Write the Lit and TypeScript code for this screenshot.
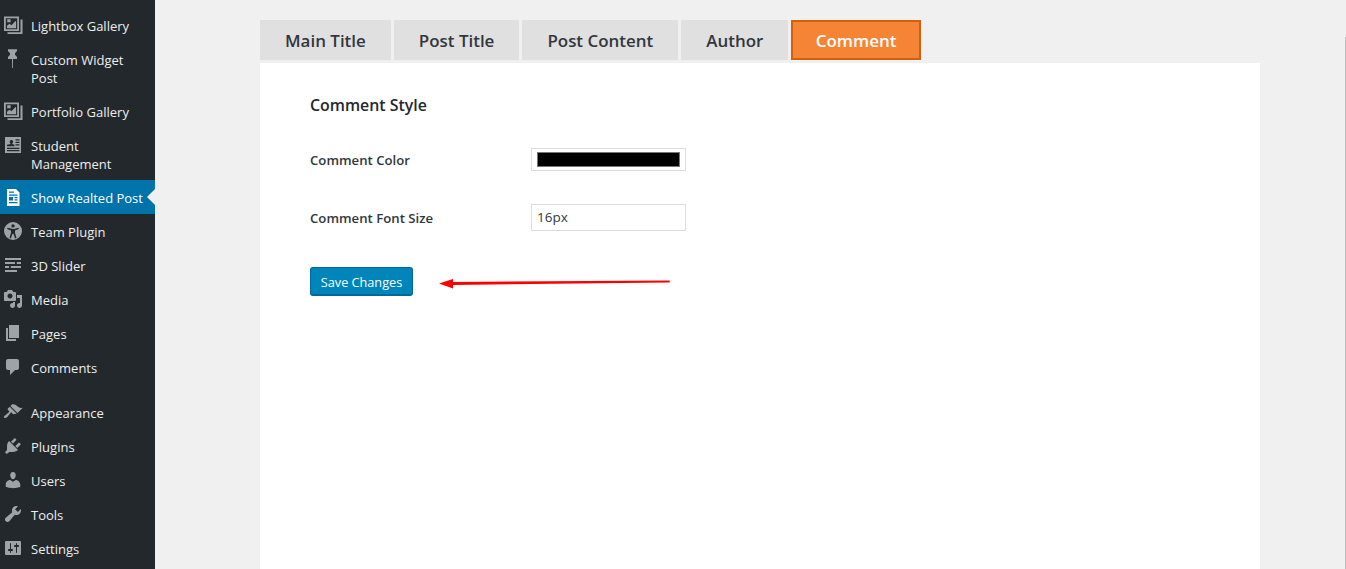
import { LitElement, html, css, svg } from 'lit';
import { customElement, state } from 'lit/decorators.js';
import { classMap } from 'lit/directives/class-map.js';

const gallery = svg`<path fill-rule="evenodd" d="M1 1.500h15V16H1zM2.800 3.200v11.100h11.400V3.200zM4 13.200v-2.400l2.500-2 2 1.500 4-4.300.6.3v6.900zM4.200 4.300h3.400v3H4.200zM17.500 4.500h2V19H4.500v-1.700h13z"/>`;
const pin = svg`<path d="M5 .3h9V2l-2 2.200v1.600L14 8v2h-4L9.900 19h-.8L9 10H5V8l2-2.200V4.200L5 2z"/>`;
const idCard = svg`<path fill-rule="evenodd" d="M2 2h16v16H2zM4 11.300h7.500v-1.500L9 8.900c.9-.5 1.200-1.400 1.100-2.300-.1-1-.7-1.700-1.700-1.700s-1.600.7-1.700 1.700c-.1.900.2 1.800 1 2.300L4 9.800zM12.500 4.200v1.200h4V4.200zM12.500 6.700v1.200h4V6.700zM12.500 9.200v1.200h4V9.200zM4 12.700v1.200h12.500v-1.200zM4 15.100v1.200h12.500v-1.200z"/>`;
const doc = svg`<path fill-rule="evenodd" d="M4 2h9l3.500 3.500V19H4zM6 4.500v1.200h5V4.500zM6 7.500v1.200h8.500V7.500zM6 10v3.500h4V10zM11.500 10v1.200h3V10zM11.500 12.300v1.200h3v-1.200zM6 15v1.200h8.500V15z"/>`;
const access = svg`<path fill-rule="evenodd" d="M10 1a9 9 0 1 1 0 18 9 9 0 0 1 0-18zm0 2.200a1.700 1.700 0 1 0 0 3.400 1.700 1.700 0 0 0 0-3.400zM4.500 6.800l-.4 1.300 3.900 1.300v2.400L6.500 17l1.300.4 1.700-4.700h1l1.700 4.700 1.300-.4-1.500-5.200V9.400l3.900-1.300-.4-1.300-3.500 1c-1 .3-2 .3-3 0z"/>`;
const lines = svg`<path d="M2 3h16v2H2zM2 7h10v2H2zM13.800 7H18v2h-4.200zM2 11h4v2H2zM7.800 11H18v2H7.800zM2 15h12v2H2z"/>`;
const media = svg`<path fill-rule="evenodd" d="M13 11V4c0-.55-.45-1-1-1h-1.670L9 1H5L3.670 3H2c-.55 0-1 .45-1 1v7c0 .55.45 1 1 1h10c.55 0 1-.45 1-1zM7 4.500c1.380 0 2.500 1.120 2.500 2.500S8.380 9.500 7 9.500 4.500 8.380 4.500 7 5.620 4.500 7 4.500zM14 6h5v10.500c0 1.380-1.120 2.500-2.500 2.500S14 17.880 14 16.500s1.120-2.500 2.500-2.500c.17 0 .34.02.5.05V9h-3V6zm-4 8.050V13h2v3.500c0 1.380-1.120 2.500-2.500 2.500S7 17.880 7 16.500 8.120 14 9.500 14c.17 0 .34.02.5.05z"/>`;
const page = svg`<path d="M6 15V2h10v13H6zm-1 1h8v2H3V5h2v11z"/>`;
const comment = svg`<path d="M5 2h9c1.100 0 2 .9 2 2v7c0 1.100-.9 2-2 2h-2l-5 5v-5H5c-1.100 0-2-.9-2-2V4c0-1.100.9-2 2-2z"/>`;
const brush = svg`<path d="M14.480 11.060L7.410 3.990l1.500-1.500c.5-.56 2.300-.47 3.510.32 1.210.8 1.430 1.280 2.910 2.100 1.180.64 2.450 1.260 4.450.85zm-.71.71L6.700 4.700 4.930 6.470c-.39.39-.39 1.020 0 1.410l1.060 1.060c.39.39.39 1.030 0 1.420-.6.6-1.430 1.110-2.210 1.690-.35.26-.7.53-1.010.84C1.430 13.230.4 14.910 1.200 15.700c.79.8 2.470-.23 3.820-1.570.31-.31.58-.66.84-1.020.57-.78 1.080-1.610 1.690-2.210.39-.39 1.020-.39 1.410 0l1.060 1.060c.39.39 1.020.39 1.410 0z"/>`;
const plug = svg`<path d="M13.110 4.360L9.870 7.600 8 5.730l3.240-3.240c.35-.34 1.050-.2 1.560.32.52.51.66 1.210.31 1.550zm-8 1.770l.91-1.120 9.010 9.010-1.190.84c-.71.71-2.630 1.160-3.820 1.160H6.140L4.900 17.260c-.59.59-1.540.59-2.120 0-.59-.58-.59-1.530 0-2.120l1.240-1.240v-3.880c0-1.130.4-3.190 1.090-3.890zm7.260 3.970l3.240-3.240c.34-.35 1.040-.21 1.550.31.52.51.66 1.210.31 1.550l-3.240 3.250z"/>`;
const user = svg`<path d="M10 9.250c-2.270 0-2.730-3.440-2.730-3.440C7 4.020 7.820 2 9.970 2c2.160 0 2.980 2.020 2.710 3.810 0 0-.41 3.440-2.680 3.440zm0 2.570L12.720 10c2.390 0 4.520 2.330 4.520 4.530v2.490s-3.650 1.130-7.240 1.130c-3.650 0-7.240-1.130-7.240-1.130v-2.490c0-2.250 1.940-4.480 4.470-4.480z"/>`;
const wrench = svg`<path fill-rule="evenodd" d="M16.680 9.770c-1.340 1.340-3.300 1.670-4.950.99l-5.410 6.520c-.99.99-2.590.99-3.580 0s-.99-2.590 0-3.570l6.520-5.420c-.68-1.650-.35-3.610.99-4.950 1.280-1.280 3.120-1.620 4.720-1.060l-2.890 2.890 2.820 2.820 2.860-2.870c.53 1.580.18 3.390-1.080 4.650z"/>`;
const sliders = svg`<path fill-rule="evenodd" d="M18 16V4c0-.55-.45-1-1-1H3c-.55 0-1 .45-1 1v12c0 .55.45 1 1 1h14c.55 0 1-.45 1-1zM8 11h1c.55 0 1 .45 1 1s-.45 1-1 1H8v1.500c0 .28-.22.5-.5.5s-.5-.22-.5-.5V13H6c-.55 0-1-.45-1-1s.45-1 1-1h1V5.500c0-.28.22-.5.5-.5s.5.22.5.5V11zm5-2h-1c-.55 0-1-.45-1-1s.45-1 1-1h1V5.500c0-.28.22-.5.5-.5s.5.22.5.5V7h1c.55 0 1 .45 1 1s-.45 1-1 1h-1v5.500c0 .28-.22.5-.5.5s-.5-.22-.5-.5V9z"/>`;

const MENU = [
  { label: 'Lightbox Gallery', icon: gallery },
  { label: 'Custom Widget Post', icon: pin },
  { label: 'Portfolio Gallery', icon: gallery },
  { label: 'Student Management', icon: idCard },
  { label: 'Show Realted Post', icon: doc, current: true },
  { label: 'Team Plugin', icon: access },
  { label: '3D Slider', icon: lines },
  { label: 'Media', icon: media },
  { label: 'Pages', icon: page },
  { label: 'Comments', icon: comment },
  { label: 'Appearance', icon: brush, gap: true },
  { label: 'Plugins', icon: plug },
  { label: 'Users', icon: user },
  { label: 'Tools', icon: wrench },
  { label: 'Settings', icon: sliders },
];

const TABS = ['Main Title', 'Post Title', 'Post Content', 'Author', 'Comment'];

@customElement('app-root')
export class AppRoot extends LitElement {
  @state()
  activeTab = 'Comment';

  static styles = css`
    :host {
      display: flex;
      position: relative;
      height: 569px;
      overflow: hidden;
      background: #f0f0f0;
      font-family: 'Open Sans', 'Noto Sans', sans-serif;
      color: #23282d;
    }

    .sidebar {
      width: 155px;
      flex: none;
      box-sizing: border-box;
      padding-top: 8px;
      background: #23282d;
    }
    .item {
      position: relative;
      display: flex;
      gap: 8px;
      padding: 9px 8px 7px 3px;
      font-size: 13px;
      line-height: 18px;
      color: #eee;
    }
    .item.gap {
      margin-top: 11px;
    }
    .item.current {
      background: #0073aa;
      color: #fff;
    }
    .item.current::after {
      content: '';
      position: absolute;
      right: 0;
      top: 9px;
      border: 8px solid transparent;
      border-left: 0;
      border-right-color: #f0f0f0;
    }
    .item svg {
      width: 20px;
      height: 20px;
      margin: -2px 0 0;
      flex: none;
      fill: #9ea3a8;
    }
    .item.current svg {
      fill: #fff;
    }

    .main {
      flex: 1;
      padding: 20px 0 0 105px;
      min-width: 0;
    }
    .tabs {
      display: flex;
      gap: 3px;
    }
    .tab {
      height: 40px;
      box-sizing: border-box;
      padding: 0 25px;
      font-size: 16.95px;
      font-weight: 600;
      line-height: 41px;
      background: #e0e0e0;
      color: #32373c;
    }
    .tab.active {
      padding: 0 22.5px;
      line-height: 37px;
      background: #f58435;
      border: 2px solid #d2600f;
      color: #fff;
    }

    .card {
      width: 1000px;
      height: 506px;
      margin-top: 3px;
      box-sizing: border-box;
      padding: 31px 50px 0;
      background: #fff;
    }
    h2 {
      margin: 0 0 32px;
      font-size: 15.9px;
      font-weight: 600;
      line-height: 22px;
      color: #23282d;
    }
    .row {
      display: grid;
      grid-template-columns: 221px 155px;
      align-items: center;
      font-size: 13.2px;
      font-weight: 600;
      color: #32373c;
      margin-bottom: 33px;
    }
    .swatch {
      height: 23px;
      box-sizing: border-box;
      padding: 3px 5px;
      border: 1px solid #ddd;
      background: #fff;
    }
    .swatch div {
      height: 15px;
      box-sizing: border-box;
      background: #000;
      border: 1px solid #777;
    }
    .input {
      height: 27px;
      box-sizing: border-box;
      padding: 0 5px;
      border: 1px solid #ddd;
      font-size: 13.5px;
      font-weight: 400;
      line-height: 25px;
      color: #32373c;
    }
    .save {
      display: block;
      width: 103px;
      height: 29px;
      margin-top: 36px;
      padding: 2px 0 0;
      box-sizing: border-box;
      border: 1px solid #006799;
      border-bottom-width: 2px;
      border-radius: 3px;
      background: #0085ba;
      color: #fff;
      font-family: inherit;
      font-size: 12.7px;
      line-height: 24px;
    }

    .arrow {
      position: absolute;
      left: 438px;
      top: 276px;
    }
    .scrollbar {
      position: absolute;
      right: 0;
      top: 37px;
      bottom: 0;
      width: 1px;
      background: #c1c1c1;
    }
  `;

  render() {
    return html`
      <nav class="sidebar">
        ${MENU.map(
          (m) => html`<div class=${classMap({ item: true, current: !!m.current, gap: !!m.gap })}>
            <svg viewBox="0 0 20 20">${m.icon}</svg>
            <span>${m.label}</span>
          </div>`
        )}
      </nav>
      <main class="main">
        <div class="tabs">
          ${TABS.map(
            (t) => html`<div class=${classMap({ tab: true, active: t === this.activeTab })}>${t}</div>`
          )}
        </div>
        <section class="card">
          <h2>Comment Style</h2>
          <div class="row">
            <span>Comment Color</span>
            <div class="swatch"><div></div></div>
          </div>
          <div class="row">
            <span>Comment Font Size</span>
            <div class="input">16px</div>
          </div>
          <button class="save">Save Changes</button>
        </section>
      </main>
      <svg class="arrow" width="234" height="14" viewBox="0 0 234 14">
        <path d="M1 7.500L15 3v3l216-1.500c1.200 0 1.200 2 0 2L15 9v3.500z" fill="#f00" />
      </svg>
      <div class="scrollbar"></div>
    `;
  }
}
